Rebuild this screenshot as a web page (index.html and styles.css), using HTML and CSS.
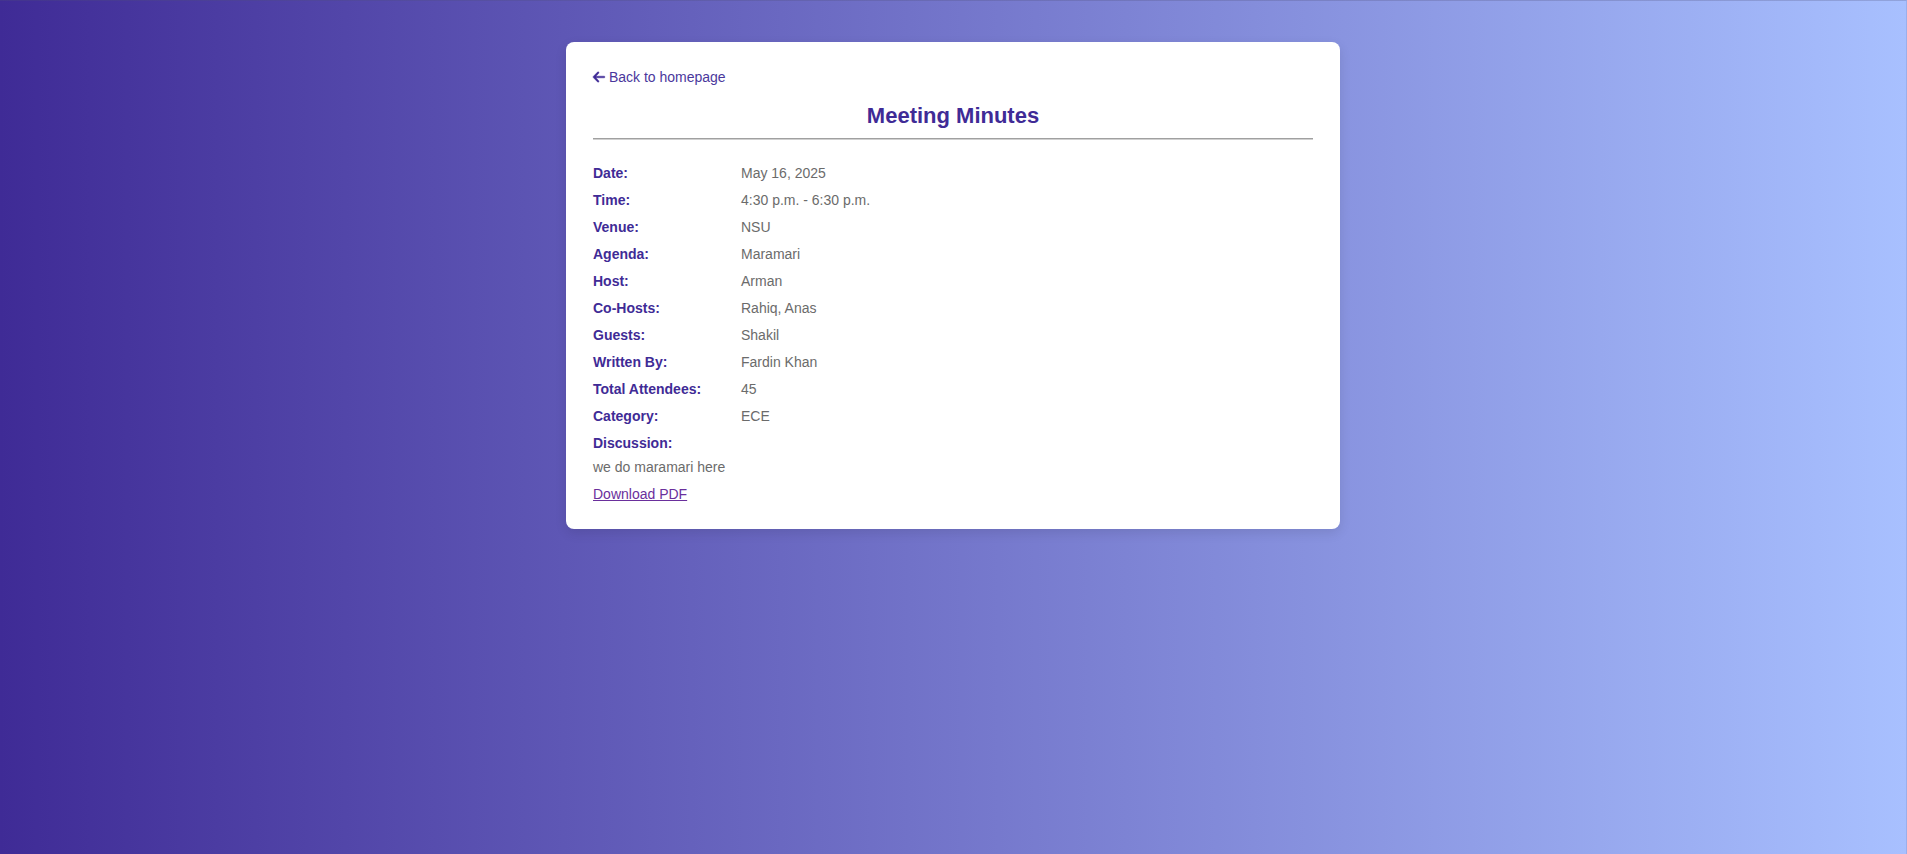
FILE: index.html
```html
<!DOCTYPE html>
<html lang="en">
<head>
<meta charset="utf-8">
<title>Meeting Minutes</title>
<link rel="stylesheet" href="styles.css">
</head>
<body>
<main class="card">
  <a class="back-link" href="#home"><svg class="back-icon" viewBox="0 0 448 512" aria-hidden="true"><path d="M9.4 233.4c-12.500 12.500-12.500 32.800 0 45.300l160 160c12.500 12.500 32.800 12.500 45.300 0s12.500-32.800 0-45.300L109.200 288 416 288c17.700 0 32-14.300 32-32s-14.300-32-32-32l-306.700 0L214.600 118.600c12.500-12.500 12.500-32.800 0-45.300s-32.800-12.500-45.300 0l-160 160z"/></svg> Back to homepage</a>
  <h1 class="title">Meeting Minutes</h1>
  <dl class="details">
    <div class="row"><dt>Date:</dt><dd>May 16, 2025</dd></div>
    <div class="row"><dt>Time:</dt><dd>4:30 p.m. - 6:30 p.m.</dd></div>
    <div class="row"><dt>Venue:</dt><dd>NSU</dd></div>
    <div class="row"><dt>Agenda:</dt><dd>Maramari</dd></div>
    <div class="row"><dt>Host:</dt><dd>Arman</dd></div>
    <div class="row"><dt>Co-Hosts:</dt><dd>Rahiq, Anas</dd></div>
    <div class="row"><dt>Guests:</dt><dd>Shakil</dd></div>
    <div class="row"><dt>Written By:</dt><dd>Fardin Khan</dd></div>
    <div class="row"><dt>Total Attendees:</dt><dd>45</dd></div>
    <div class="row"><dt>Category:</dt><dd>ECE</dd></div>
    <div class="row row-block"><dt>Discussion:</dt><dd>we do maramari here</dd></div>
  </dl>
  <a class="download" href="#pdf">Download PDF</a>
</main>
</body>
</html>
```
FILE: styles.css
```css
* {
  box-sizing: border-box;
}

html {
  min-height: 100%;
  background: linear-gradient(to right, #3f2b96, #a8c0ff);
}

body {
  min-height: 100vh;
  margin: 0;
  padding: 41px 20px;
  border-top: 1px solid rgba(80, 80, 120, 0.25);
  border-right: 1px solid rgba(80, 80, 120, 0.15);
  font-family: "Liberation Sans", Arial, sans-serif;
  font-size: 14px;
  line-height: 17px;
  color: #6b6b6b;
}

.card {
  max-width: 774px;
  margin: 0 auto;
  padding: 27px 27px 26px;
  background: #fff;
  border-radius: 8px;
  box-shadow: 0 4px 12px rgba(0, 0, 0, 0.1);
}

.back-link {
  display: block;
  width: fit-content;
  color: #4a379c;
  text-decoration: none;
}

.back-icon {
  width: 12px;
  height: 14px;
  fill: #3f2b96;
  stroke: #3f2b96;
  stroke-width: 16;
  overflow: visible;
  vertical-align: -2px;
}

.title {
  margin: 16px 0 26px;
  padding-bottom: 9px;
  border-bottom: 1px solid #a0a0a0;
  box-shadow: 0 1px #d0d0d0;
  color: #3f2b96;
  font-size: 22px;
  line-height: 27px;
  text-align: center;
}

.details {
  margin: 0;
}

.row {
  display: flex;
  margin-bottom: 10px;
}

.row dt {
  width: 148px;
  color: #3f2b96;
  font-weight: bold;
}

.row dd {
  margin: 0;
}

.row-block {
  flex-direction: column;
  gap: 7px;
}

.download {
  color: #6a2f9c;
}
```
